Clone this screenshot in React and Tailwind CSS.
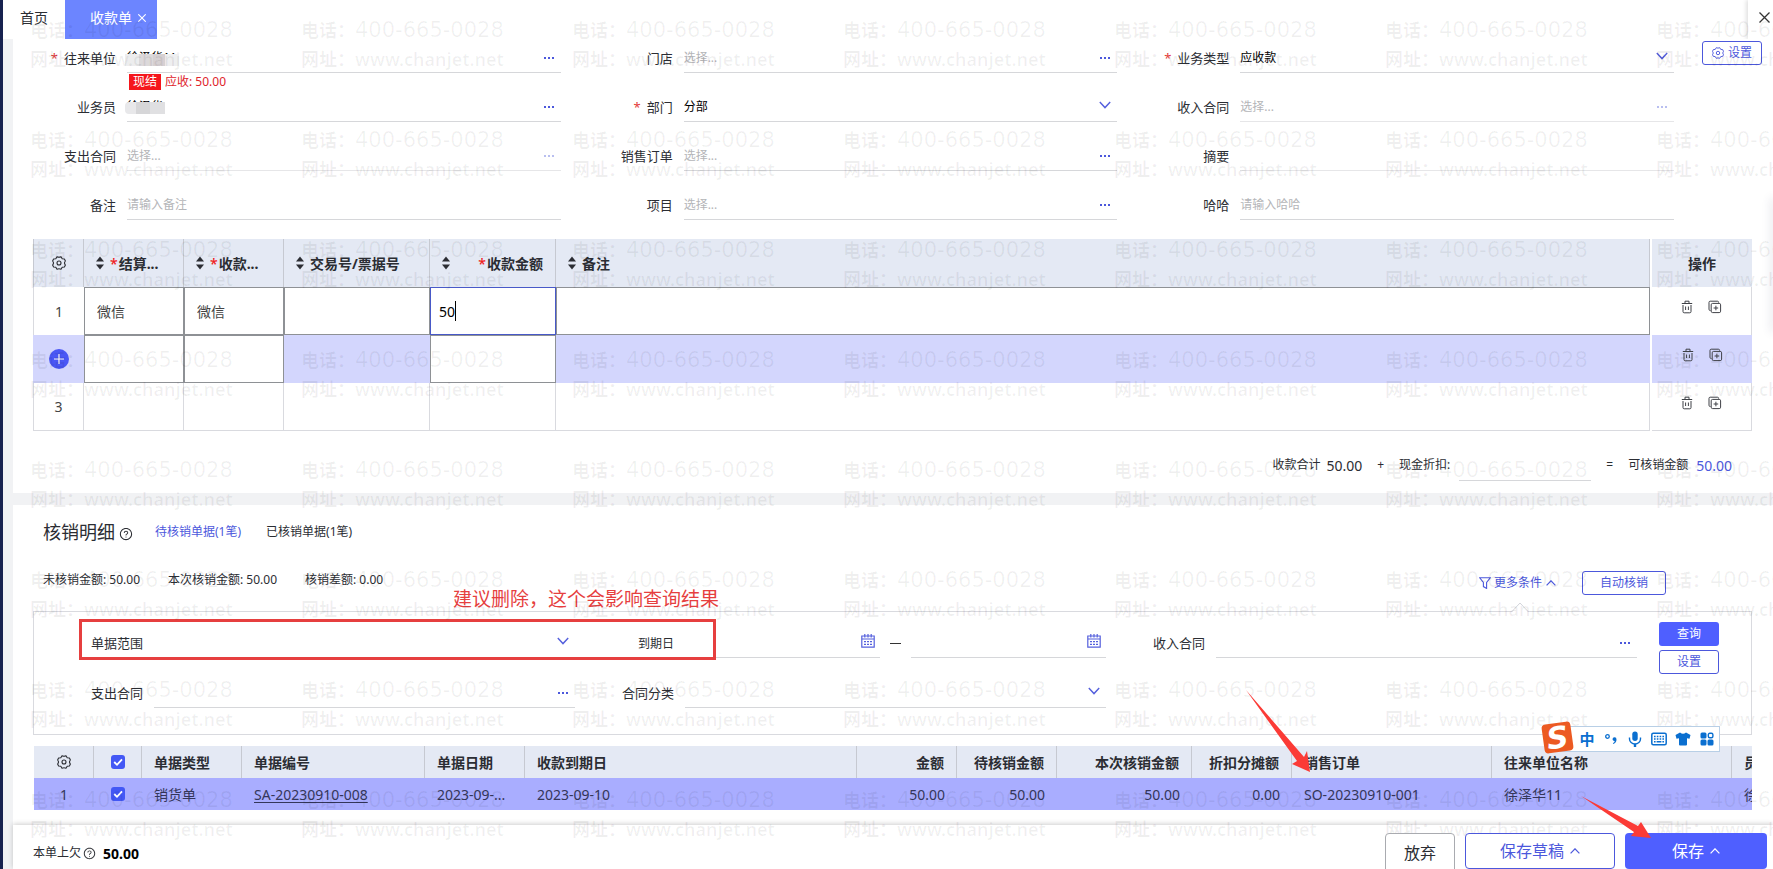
import React from "react";
import { AiOutlineQuestionCircle } from "react-icons/ai";

function ChevronDown({ className = "" }) {
  return (
    <svg viewBox="0 0 12 8" className={`h-2 w-3 shrink-0 ${className}`} fill="none" stroke="currentColor" strokeWidth="1.4">
      <path d="M0.8 1 6 6.6 11.2 1" />
    </svg>
  );
}

function CaretUp({ className = "h-[6px] w-[10px]" }) {
  return (
    <svg viewBox="0 0 10 6" className={`shrink-0 ${className}`} fill="none" stroke="currentColor" strokeWidth="1.2">
      <path d="M0.6 5.4 5 0.8 9.4 5.4" />
    </svg>
  );
}

function Gear({ className = "size-[14px]" }) {
  return (
    <svg viewBox="0 0 14 14" className={`shrink-0 ${className}`} fill="none" stroke="currentColor" strokeWidth="1.1" strokeLinejoin="round">
      <path d="M5 0.8Q7 1.8 9 0.8L10.2 2.8 12.4 3 13.4 5Q11.6 7 13.4 9L12.4 11 10.2 11.2 9 13.2Q7 12.2 5 13.2L3.8 11.2 1.6 11 0.6 9Q2.4 7 0.6 5L1.6 3 3.8 2.8Z" />
      <circle cx="7" cy="7" r="2" />
    </svg>
  );
}

function SortIcon() {
  return (
    <svg viewBox="0 0 8 14" className="h-[14px] w-2 shrink-0" fill="#2b2d33">
      <path d="M4 0.5 8 5.5H0Z" />
      <path d="M4 13.5 8 8.5H0Z" />
    </svg>
  );
}

function TrashIcon() {
  return (
    <svg viewBox="0 0 12 14" className="h-[14px] w-3" fill="none" stroke="currentColor" strokeWidth="1">
      <path d="M0.8 3.5H11.2M4 3.5V1.2H8V3.5" />
      <path d="M2 5V11.6Q2 12.8 3.2 12.8H8.8Q10 12.8 10 11.6V5M4.6 6.5V10M7.4 6.5V10" />
    </svg>
  );
}

function CopyIcon() {
  return (
    <svg viewBox="0 0 14 14" className="size-[14px]" fill="none" stroke="currentColor" strokeWidth="1">
      <path d="M2.6 10.5H2.2Q1 10.5 1 9.3V2.4Q1 1.2 2.2 1.2H9.4Q10.6 1.2 10.6 2.4V2.8" />
      <rect x="3.2" y="3.4" width="9.4" height="9.2" rx="1.4" />
      <path d="M5.6 8H10.2M7.9 5.7V10.3" />
    </svg>
  );
}

function CalendarIcon() {
  return (
    <svg viewBox="0 0 14 14" className="size-[14px]" fill="none" stroke="currentColor" strokeWidth="1.2">
      <path d="M0.8 2H13.2V13.2H0.8ZM0.8 5H13.2M3.8 0V3.4M7 0V3.4M10.2 0V3.4" />
      <path d="M3 7.6H5M6 7.6H8M9 7.6H11M3 10.4H5M6 10.4H8M9 10.4H11" />
    </svg>
  );
}

function Dots({ label, faded }) {
  return (
    <button type="button" aria-label={label} className={`mr-[7px] flex h-4 items-center gap-[2px] ${faded ? "text-[#b9bff0]" : "text-[#4c58dc]"}`}>
      <span className="size-[2px] bg-current" />
      <span className="size-[2px] bg-current" />
      <span className="size-[2px] bg-current" />
    </button>
  );
}

function Control({ id, label, kind, value = "", placeholder, faded }) {
  return (
    <div className={`flex h-[34px] min-w-0 flex-1 items-center border-b pt-1 ${faded ? "border-[#e6e6e8]" : "border-[#d6d7da]"}`}>
      {kind === "select" ? (
        <>
          <select id={id} className="min-w-0 flex-1 appearance-none bg-transparent text-[12px] text-black outline-none">
            <option>{value}</option>
          </select>
          <ChevronDown className="mr-[6px] mb-1 text-[#5560dd]" />
        </>
      ) : (
        <input
          id={id}
          defaultValue={value}
          placeholder={placeholder}
          className="min-w-0 flex-1 bg-transparent text-[12px] text-black outline-none placeholder:text-[#b4b5b8]"
        />
      )}
      {kind === "lookup" && <Dots label={`选择${label}`} faded={faded} />}
      {kind === "date" && (
        <button type="button" aria-label="选择日期" className="mr-[5px] mb-1 text-[#5560dd]">
          <CalendarIcon />
        </button>
      )}
    </div>
  );
}

function FormField({ id, label, required, help, mosaic, ...rest }) {
  return (
    <div className="relative h-[49px] pr-[9px]">
      <div className="flex gap-[11px]">
        <label htmlFor={id} className="flex h-[34px] w-[103px] shrink-0 items-center justify-end pt-[6px] text-[13px] text-[#2b2d33]">
          {required && <span className="mr-[6px] text-[#e33b3b]">*</span>}
          {label}
        </label>
        <Control id={id} label={label} {...rest} />
      </div>
      {mosaic}
      {help}
    </div>
  );
}

function Receivable() {
  return (
    <div className="ml-[116px] flex items-center gap-1 pt-px text-[12px] leading-4">
      <span className="bg-[#f5161c] px-1 text-white">现结</span>
      <span className="text-[#e0242c]">应收: 50.00</span>
    </div>
  );
}

function MosaicLong() {
  return (
    <div className="absolute top-[15px] left-[112px] flex h-[12px]">
      <span className="w-[14px] bg-[#ededee]" />
      <span className="w-[14px] bg-[#dcd9da]" />
      <span className="w-[12px] bg-[#d6d0d2]" />
      <span className="w-[14px] bg-[#eeeff0]" />
    </div>
  );
}

function MosaicShort() {
  return (
    <div className="absolute top-[14px] left-[112px] flex h-[12px]">
      <span className="w-[11px] rounded-l bg-[#e8e8ea]" />
      <span className="w-[14px] bg-[#d6d6d8]" />
      <span className="w-[15px] bg-[#e0e0e2]" />
    </div>
  );
}

const headerFields = [
  { id: "partner", label: "往来单位", required: true, kind: "lookup", value: "徐泽华11", help: <Receivable />, mosaic: <MosaicLong /> },
  { id: "store", label: "门店", kind: "lookup", placeholder: "选择..." },
  { id: "biz", label: "业务类型", required: true, kind: "select", value: "应收款" },
  { id: "clerk", label: "业务员", kind: "lookup", value: "徐泽华", mosaic: <MosaicShort /> },
  { id: "dept", label: "部门", required: true, kind: "select", value: "分部" },
  { id: "income", label: "收入合同", kind: "lookup", placeholder: "选择...", faded: true },
  { id: "expense", label: "支出合同", kind: "lookup", placeholder: "选择...", faded: true },
  { id: "order", label: "销售订单", kind: "lookup", placeholder: "选择..." },
  { id: "summary", label: "摘要", kind: "text", faded: true },
  { id: "note", label: "备注", kind: "text", placeholder: "请输入备注" },
  { id: "project", label: "项目", kind: "lookup", placeholder: "选择..." },
  { id: "haha", label: "哈哈", kind: "text", placeholder: "请输入哈哈" },
];

function TopBar() {
  return (
    <nav className="flex h-[39px] shrink-0 items-stretch text-[14px]">
      <a href="#home" className="flex items-center pb-1 pl-[17px] text-[#2b2d33]">首页</a>
      <div className="ml-[17px] flex w-[92px] items-center bg-[#6c85ff] pb-1 pl-[25px] text-white">
        <a href="#receipt">收款单</a>
        <button type="button" aria-label="关闭收款单" className="ml-[6px]">
          <svg viewBox="0 0 8 8" className="size-2" stroke="currentColor" strokeWidth="1.1">
            <path d="M0.3 0.3 7.7 7.7M7.7 0.3 0.3 7.7" />
          </svg>
        </button>
      </div>
      <button type="button" aria-label="关闭" className="ml-auto flex w-[25px] items-center justify-center pb-1 pl-2 text-[#333] shadow-[-2px_0_4px_rgba(0,0,0,0.12)]">
        <svg viewBox="0 0 11 11" className="size-[11px]" stroke="currentColor" strokeWidth="1.3">
          <path d="M0.5 0.5 10.5 10.5M10.5 0.5 0.5 10.5" />
        </svg>
      </button>
    </nav>
  );
}

function SortHead({ children, required, right }) {
  return (
    <th className="border-r border-[#c6c9d1] bg-[#e4e9f4] px-3 font-bold">
      <div className="flex items-center">
        <SortIcon />
        <span className={`flex items-center whitespace-nowrap ${right ? "ml-auto" : "ml-[6px]"}`}>
          {required && <span className="mr-px font-medium text-[#f02020]">*</span>}
          {children}
        </span>
      </div>
    </th>
  );
}

function EditCell({ label, value = "" }) {
  return (
    <td className="p-0">
      <input aria-label={label} defaultValue={value} className="block h-12 w-full border border-[#8e9195] bg-white px-3 text-[14px] text-[#444] outline-none" />
    </td>
  );
}

function RowActions({ selected, last }) {
  return (
    <td className={`h-12 p-0 ${selected ? "bg-[#d3d6fd]" : "border-r border-[#d9dadf]"} ${last ? "border-b" : ""}`}>
      <div className="flex items-center justify-center gap-[15px] pb-2 text-[#3f4147]">
        <button type="button" aria-label="删除行"><TrashIcon /></button>
        <button type="button" aria-label="复制行"><CopyIcon /></button>
      </div>
    </td>
  );
}

function PaymentTable() {
  return (
    <div className="mt-1 mr-[21px] ml-5 flex gap-[2px] text-[14px] text-[#2b2d33]">
      <table className="min-w-0 flex-1 table-fixed border-separate border-spacing-0 text-left">
        <colgroup>
          <col className="w-[51px]" />
          <col className="w-[100px]" />
          <col className="w-[100px]" />
          <col className="w-[146px]" />
          <col className="w-[126px]" />
          <col />
        </colgroup>
        <thead>
          <tr className="h-12">
            <th className="border-r border-l border-[#c6c9d1] bg-[#e4e9f4] p-0">
              <button type="button" aria-label="列设置" className="mx-auto block"><Gear /></button>
            </th>
            <SortHead required>结算...</SortHead>
            <SortHead required>收款...</SortHead>
            <SortHead>交易号/票据号</SortHead>
            <SortHead required right>收款金额</SortHead>
            <SortHead>备注</SortHead>
          </tr>
        </thead>
        <tbody>
          <tr className="h-12">
            <td className="border-l border-[#d9dadf] text-center text-[#444]">1</td>
            <EditCell label="结算方式" value="微信" />
            <EditCell label="收款账户" value="微信" />
            <EditCell label="交易号" />
            <td className="p-0">
              <div className="flex h-12 items-center border border-[#4859c8] bg-white pl-2">
                <input aria-label="收款金额" defaultValue="50" className="w-4 bg-transparent text-[14px] text-black outline-none" />
                <span className="h-5 w-px bg-black" />
              </div>
            </td>
            <EditCell label="备注" />
          </tr>
          <tr className="h-12 bg-[#d3d6fd]">
            <td className="p-0">
              <button type="button" aria-label="新增行" className="mx-auto flex size-5 items-center justify-center rounded-full bg-[#4a57f5] text-white">
                <svg viewBox="0 0 10 10" className="size-[10px]" stroke="currentColor" strokeWidth="1.2"><path d="M5 0V10M0 5H10" /></svg>
              </button>
            </td>
            <EditCell label="结算方式" />
            <EditCell label="收款账户" />
            <td />
            <EditCell label="收款金额" />
            <td />
          </tr>
          <tr className="h-12">
            <td className="border-r border-b border-l border-[#d9dadf] text-center text-[#444]">3</td>
            <td className="border-r border-b border-[#d9dadf]" />
            <td className="border-r border-b border-[#d9dadf]" />
            <td className="border-r border-b border-[#d9dadf]" />
            <td className="border-r border-b border-[#d9dadf]" />
            <td className="border-r border-b border-[#d9dadf]" />
          </tr>
        </tbody>
      </table>
      <table className="w-[100px] shrink-0 table-fixed border-separate border-spacing-0">
        <thead>
          <tr className="h-12"><th className="bg-[#e4e9f4] p-0 font-bold">操作</th></tr>
        </thead>
        <tbody>
          <tr><RowActions /></tr>
          <tr><RowActions selected /></tr>
          <tr><RowActions last /></tr>
        </tbody>
      </table>
    </div>
  );
}

function Totals() {
  return (
    <div className="flex h-[62px] items-center justify-end pt-[6px] pr-[41px] text-[12px] text-[#2b2d33]">
      <span>收款合计</span>
      <span className="ml-[6px] text-[14px]">50.00</span>
      <span className="mx-[15px]">+</span>
      <label htmlFor="discount">现金折扣:</label>
      <input id="discount" className="ml-[9px] h-8 w-[132px] border-b border-[#d6d7da] bg-transparent outline-none" />
      <span className="mx-[15px]">=</span>
      <span>可核销金额</span>
      <span className="ml-2 text-[14px] text-[#4c58dc]">50.00</span>
    </div>
  );
}

function FilterField({ id, label, small, children, ...rest }) {
  return (
    <div className="flex items-end gap-[11px] pr-[10px]">
      <label htmlFor={id} className={`flex h-[34px] w-[89px] shrink-0 items-center justify-end pt-[6px] text-[#2b2d33] ${small ? "text-[12px]" : "text-[13px]"}`}>{label}</label>
      {children || <Control id={id} label={label} {...rest} />}
    </div>
  );
}

function FilterPanel() {
  return (
    <div className="relative mr-[21px] ml-5 flex border border-[#d9dadf] pb-[26px] pl-5">
      <svg viewBox="0 0 18 10" className="absolute -top-[10px] right-[222px] h-[10px] w-[18px]" fill="#fff" stroke="#d3d4da" strokeWidth="1">
        <path d="M0.5 10 9 1 17.5 10" />
      </svg>
      <div className="grid flex-1 grid-cols-3 grid-rows-[46px_50px]">
        <FilterField id="scope" label="单据范围" kind="select" />
        <FilterField id="due" label="到期日" small>
          <Control id="due" kind="date" />
          <span className="mb-[14px] -mx-px h-px w-[11px] shrink-0 bg-[#333]" />
          <Control id="due-end" kind="date" />
        </FilterField>
        <FilterField id="f-income" label="收入合同" kind="lookup" />
        <FilterField id="f-expense" label="支出合同" kind="lookup" />
        <FilterField id="f-type" label="合同分类" kind="select" />
      </div>
      <div className="mt-[10px] mr-8 ml-3 flex w-[60px] flex-col gap-1 text-[12px]">
        <button type="button" className="h-6 rounded-[3px] bg-[#4f5fff] text-white">查询</button>
        <button type="button" className="h-6 rounded-[3px] border border-[#4c58dc] bg-white text-[#4c58dc]">设置</button>
      </div>
      <div className="pointer-events-none absolute top-[7px] left-[45px] h-[41px] w-[637px] border-3 border-[#e63f3f]" />
      <p className="absolute -top-[27px] left-[419px] text-[19px] leading-7 whitespace-nowrap text-[#e63f3f]">建议删除，这个会影响查询结果</p>
    </div>
  );
}

function Check({ label }) {
  return (
    <span className="relative mx-auto block size-[14px]">
      <input type="checkbox" aria-label={label} defaultChecked className="block size-[14px] appearance-none rounded-[3px] bg-[#4358f5]" />
      <svg viewBox="0 0 14 14" className="pointer-events-none absolute inset-0 size-[14px]" fill="none" stroke="#fff" strokeWidth="1.8">
        <path d="M3.2 7 6 9.8 11 4.4" />
      </svg>
    </span>
  );
}

const detailColumns = [
  { title: "单据类型", value: "销货单", width: "w-[100px]" },
  { title: "单据编号", value: "SA-20230910-008", width: "w-[183px]", link: true },
  { title: "单据日期", value: "2023-09-...", width: "w-[100px]" },
  { title: "收款到期日", value: "2023-09-10", width: "" },
  { title: "金额", value: "50.00", width: "w-[100px]", right: true },
  { title: "待核销金额", value: "50.00", width: "w-[100px]", right: true },
  { title: "本次核销金额", value: "50.00", width: "w-[135px]", right: true },
  { title: "折扣分摊额", value: "0.00", width: "w-[100px]", right: true },
  { title: "销售订单", value: "SO-20230910-001", width: "w-[200px]" },
  { title: "往来单位名称", value: "徐泽华11", width: "w-[240px]" },
];

function DetailTable() {
  return (
    <div className="mt-[11px] mr-[21px] ml-[21px] text-[14px] text-[#2b2d33]">
      <table className="w-full table-fixed border-separate border-spacing-0 text-left">
        <colgroup>
          <col className="w-[60px]" />
          <col className="w-12" />
          {detailColumns.map((c) => <col key={c.title} className={c.width} />)}
          <col className="w-5" />
        </colgroup>
        <thead>
          <tr className="h-8 bg-[#e4e9f4]">
            <th className="border-r border-[#c6c9d1] p-0">
              <button type="button" aria-label="列设置" className="mx-auto block"><Gear /></button>
            </th>
            <th className="border-r border-[#c6c9d1] p-0"><Check label="全选" /></th>
            {detailColumns.map((c) => (
              <th key={c.title} className={`border-r border-[#c6c9d1] px-3 py-0 font-bold whitespace-nowrap ${c.right ? "text-right" : ""}`}>{c.title}</th>
            ))}
            <th className="overflow-hidden py-0 pr-0 pl-3 font-bold whitespace-nowrap">员</th>
          </tr>
        </thead>
        <tbody>
          <tr className="h-8 bg-[#a9adff] text-[#34365a]">
            <td className="p-0 text-center">1</td>
            <td className="p-0"><Check label="选择第1行" /></td>
            {detailColumns.map((c) => (
              <td key={c.title} className={`px-3 py-0 whitespace-nowrap ${c.right ? "text-right" : ""}`}>
                {c.link ? <a href="#doc" className="underline underline-offset-2">{c.value}</a> : c.value}
              </td>
            ))}
            <td className="overflow-hidden py-0 pr-0 pl-3 whitespace-nowrap">徐</td>
          </tr>
        </tbody>
      </table>
    </div>
  );
}

function WriteOff() {
  return (
    <section className="min-h-0 flex-1 bg-white">
      <header className="flex h-[54px] items-center pl-[30px] text-[12px] text-[#2b2d33]">
        <h2 className="text-[18px]">核销明细</h2>
        <AiOutlineQuestionCircle className="mt-1 ml-1 size-[14px]" />
        <a href="#pending" className="ml-[22px] text-[#4c58dc]">待核销单据(1笔)</a>
        <a href="#done" className="ml-[25px]">已核销单据(1笔)</a>
      </header>
      <div className="flex h-[52px] items-start pl-[30px] text-[12px] text-[#2b2d33]">
        <div className="flex gap-7 pt-3">
          <span>未核销金额: 50.00</span>
          <span>本次核销金额: 50.00</span>
          <span>核销差额: 0.00</span>
        </div>
        <div className="mt-3 mr-[107px] ml-auto flex h-6 items-center text-[#4c58dc]">
          <button type="button" className="flex items-center">
            <svg viewBox="0 0 12 12" className="mr-[3px] size-3" fill="none" stroke="currentColor" strokeWidth="1.1">
              <path d="M0.7 0.8H11.3L7.6 5.4V11.4L4.4 9.6V5.4Z" />
            </svg>
            更多条件
            <CaretUp className="ml-1 h-[6px] w-[10px]" />
          </button>
          <button type="button" className="ml-[26px] h-6 w-[84px] rounded-[3px] border border-[#4c58dc] bg-white">自动核销</button>
        </div>
      </div>
      <FilterPanel />
      <DetailTable />
    </section>
  );
}

function Footer() {
  return (
    <footer className="relative flex h-11 shrink-0 items-start bg-white pr-[6px] pl-5 shadow-[0_-1px_5px_rgba(0,0,0,0.2)]">
      <div className="flex h-11 items-center pt-3 text-[12px] text-[#2b2d33]">
        本单上欠
        <AiOutlineQuestionCircle className="ml-[2px] size-[13px]" />
        <b className="ml-[7px] text-[14px] text-black">50.00</b>
      </div>
      <div className="relative z-10 mt-2 ml-auto flex h-9 gap-[10px] overflow-hidden text-[16px]">
        <button type="button" className="h-10 w-[70px] rounded border border-[#a9abb0] bg-white text-[#2b2d33]">放弃</button>
        <button type="button" className="flex h-9 w-[150px] items-center justify-center gap-[6px] rounded border border-[#4c58dc] bg-white text-[#4c58dc]">
          保存草稿 <CaretUp />
        </button>
        <button type="button" className="flex h-9 w-[142px] items-center justify-center gap-[6px] rounded bg-[#4f5fff] text-white">
          保存 <CaretUp />
        </button>
      </div>
    </footer>
  );
}

function ImeSlot({ children }) {
  return <span className="flex w-6 items-center justify-center">{children}</span>;
}

function InputMethodBar() {
  return (
    <div className="absolute right-[53px] bottom-[117px] flex h-[26px] w-[160px] items-center justify-end border border-[#b8cfe6] bg-white text-[#0a6fd0]">
      <div className="absolute -top-[4px] -left-[18px] flex size-[29px] -rotate-8 items-center justify-center rounded-[4px] bg-[#ec5a22] font-['DejaVu_Sans'] text-[30px] leading-none font-bold text-white italic">S</div>
      <ImeSlot><span className="text-[15px] leading-none font-bold">中</span></ImeSlot>
      <ImeSlot>
        <svg viewBox="0 0 16 16" className="size-4" fill="currentColor">
          <circle cx="4.5" cy="5.5" r="1.8" fill="none" stroke="currentColor" strokeWidth="1.3" />
          <path d="M9.5 8.2a2 2 0 1 1 4 .2c0 2.2-1 3.8-3.2 4.6l-.4-.9c1.2-.5 1.7-1.2 1.7-2.1a2 2 0 0 1-2.1-1.8Z" />
        </svg>
      </ImeSlot>
      <ImeSlot>
        <svg viewBox="0 0 14 16" className="h-4 w-[14px]" fill="currentColor">
          <rect x="4.3" y="0.5" width="5.4" height="9.5" rx="2.7" />
          <path d="M1.5 6.5V8a5.5 5 0 0 0 11 0V6.5" fill="none" stroke="currentColor" strokeWidth="1.4" />
          <rect x="5.8" y="13" width="2.4" height="3" />
        </svg>
      </ImeSlot>
      <ImeSlot>
        <svg viewBox="0 0 16 14" className="h-[14px] w-4">
          <rect x="0.8" y="1.3" width="14.4" height="11.4" rx="1.5" fill="none" stroke="currentColor" strokeWidth="1.5" />
          <path d="M3 4.5H13M3 7H13" stroke="currentColor" strokeWidth="1.5" strokeDasharray="1.6 1.2" />
          <path d="M3 9.8H13" stroke="currentColor" strokeWidth="1.5" strokeDasharray="1.6 1 4.8 1" />
        </svg>
      </ImeSlot>
      <ImeSlot>
        <svg viewBox="0 0 16 14" className="h-[14px] w-4" fill="currentColor">
          <path d="M5 0.5Q8 3 11 0.5L15.5 3 14.5 6.8 12 6.3V12.5Q12 13.5 11 13.5H5Q4 13.5 4 12.5V6.3L1.5 6.8 0.5 3Z" />
        </svg>
      </ImeSlot>
      <ImeSlot>
        <svg viewBox="0 0 14 14" className="size-[14px]" fill="currentColor">
          <rect x="0.5" y="0.5" width="6" height="6" rx="1.5" />
          <rect x="8.3" y="1.2" width="4.6" height="4.6" rx="1.5" fill="none" stroke="currentColor" strokeWidth="1.4" />
          <rect x="0.5" y="7.5" width="6" height="6" rx="1.5" />
          <rect x="7.5" y="7.5" width="6" height="6" rx="1.5" />
        </svg>
      </ImeSlot>
    </div>
  );
}

function Arrows() {
  return (
    <svg viewBox="1240 680 420 180" className="pointer-events-none absolute right-[113px] bottom-[9px] h-[180px] w-[420px]" fill="#fb3b36">
      <path d="M1246 690 1304 757 1307 751 1310 772 1292 764 1297 761Z" />
      <path d="M1581 796 1638 826 1641 822 1651 838 1631 836 1634 832Z" />
    </svg>
  );
}

function Watermark() {
  return (
    <div aria-hidden="true" className="pointer-events-none absolute inset-0 grid auto-rows-[110px] grid-cols-[repeat(7,271px)] overflow-hidden pt-[16px] pl-[27px] text-[18px] leading-[29px] font-semibold whitespace-nowrap text-black/6">
      {Array.from({ length: 56 }, (_, i) => (
        <div key={i}>
          <div className="flex">电话：<span className="font-['DejaVu_Sans'] text-[21px] font-normal">400-665-0028</span></div>
          <div>网址：www.chanjet.net</div>
        </div>
      ))}
    </div>
  );
}

export default function App() {
  return (
    <div className="relative flex h-screen flex-col overflow-hidden border-l-3 border-[#17224f] bg-white font-['Noto_Sans','Noto_Sans_CJK_SC',sans-serif]">
      <TopBar />
      <main className="flex min-h-0 flex-1 flex-col gap-3 overflow-hidden bg-[#f1f2f4] pl-[10px]">
        <section className="bg-white">
          <div className="flex items-start">
            <div className="grid flex-1 grid-cols-3">
              {headerFields.map((f) => <FormField key={f.id} {...f} />)}
            </div>
            <button type="button" className="mt-[2px] mr-[11px] ml-[19px] flex h-6 w-[60px] items-center justify-center gap-1 rounded-[3px] border border-[#4c58dc] bg-white text-[12px] text-[#4c58dc]">
              <Gear className="size-3" />设置
            </button>
          </div>
          <PaymentTable />
          <Totals />
        </section>
        <WriteOff />
      </main>
      <div className="flex flex-col bg-[#f1f2f4] pl-[10px]">
        <Footer />
      </div>
      <div className="absolute top-[200px] -right-px h-[130px] w-px shadow-[0_0_10px_2px_rgba(60,70,110,0.15)]" />
      <Watermark />
      <InputMethodBar />
      <div className="pointer-events-none absolute inset-0 z-20"><Arrows /></div>
    </div>
  );
}
